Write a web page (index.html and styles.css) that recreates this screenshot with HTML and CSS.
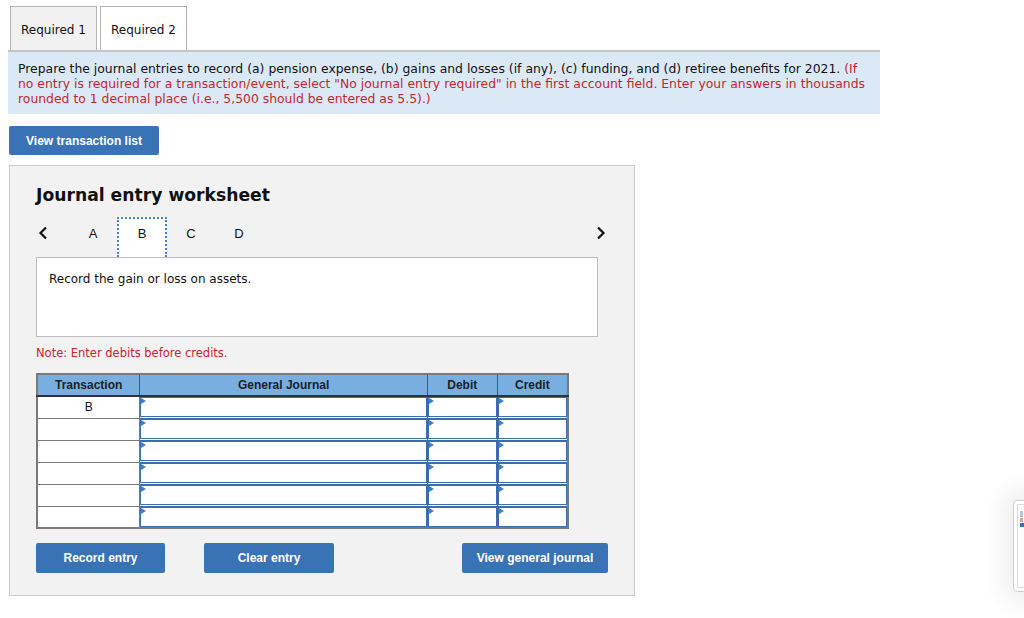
FILE: index.html
```html
<!DOCTYPE html>
<html>
<head>
<meta charset="utf-8">
<link rel="stylesheet" href="styles.css">
</head>
<body>
<div class="page">
  <div class="tabs">
    <div class="tab">Required 1</div>
    <div class="tab active">Required 2</div>
  </div>
  <div class="info">
    Prepare the journal entries to record (a) pension expense, (b) gains and losses (if any), (c) funding, and (d) retiree benefits for 2021. <span class="red">(If no entry is required for a transaction/event, select "No journal entry required" in the first account field. Enter your answers in thousands rounded to 1 decimal place (i.e., 5,500 should be entered as 5.5).)</span>
  </div>
  <button class="btn btn-list">View transaction list</button>

  <div class="worksheet">
    <h2 class="ws-title">Journal entry worksheet</h2>
    <div class="ws-nav">
      <span class="chev prev"><svg width="10" height="14" viewBox="0 0 10 14"><path d="M8 1.5 L2.5 7 L8 12.5" fill="none" stroke="#111" stroke-width="2.2"/></svg></span>
      <span class="step">A</span>
      <span class="step current">B</span>
      <span class="step">C</span>
      <span class="step">D</span>
      <span class="chev next"><svg width="10" height="14" viewBox="0 0 10 14"><path d="M2 1.5 L7.5 7 L2 12.5" fill="none" stroke="#111" stroke-width="2.2"/></svg></span>
    </div>
    <div class="desc">Record the gain or loss on assets.</div>
    <div class="note">Note: Enter debits before credits.</div>

    <table class="journal">
      <thead>
        <tr>
          <th class="c-tr">Transaction</th>
          <th class="c-gj">General Journal</th>
          <th class="c-dr">Debit</th>
          <th class="c-cr">Credit</th>
        </tr>
      </thead>
      <tbody>
        <tr><td class="tr">B</td><td class="in"><div class="box"></div></td><td class="in"><div class="box"></div></td><td class="in"><div class="box"></div></td></tr>
        <tr><td class="tr"></td><td class="in"><div class="box"></div></td><td class="in"><div class="box"></div></td><td class="in"><div class="box"></div></td></tr>
        <tr><td class="tr"></td><td class="in"><div class="box"></div></td><td class="in"><div class="box"></div></td><td class="in"><div class="box"></div></td></tr>
        <tr><td class="tr"></td><td class="in"><div class="box"></div></td><td class="in"><div class="box"></div></td><td class="in"><div class="box"></div></td></tr>
        <tr><td class="tr"></td><td class="in"><div class="box"></div></td><td class="in"><div class="box"></div></td><td class="in"><div class="box"></div></td></tr>
        <tr><td class="tr"></td><td class="in"><div class="box"></div></td><td class="in"><div class="box"></div></td><td class="in"><div class="box"></div></td></tr>
      </tbody>
    </table>

    <div class="actions">
      <button class="btn btn-record">Record entry</button>
      <button class="btn btn-clear">Clear entry</button>
      <button class="btn btn-view">View general journal</button>
    </div>
  </div>
</div>

<div class="thumb">
  <div class="thumb-inner">
    <span class="t1"></span>
    <span class="t2"></span>
    <span class="t3"></span>
  </div>
</div>
</body>
</html>
```

FILE: styles.css
```css
* { box-sizing: border-box; }
html, body { margin: 0; padding: 0; background: #fff; }
body {
  font-family: "DejaVu Sans", Verdana, sans-serif;
  font-size: 12px;
  color: #111;
  overflow: hidden;
  height: 618px;
}
.page {
  padding: 6px 0 0 8px;
}
.tabs {
  display: flex;
  gap: 3px;
  padding-left: 2px;
  width: 872px;
  border-bottom: 2px solid #c4c4c4;
}
.tab {
  width: 87px;
  height: 44px;
  padding-top: 1px;
  line-height: 44px;
  text-align: center;
  background: #f1f1f1;
  border: 1px solid #b3b3b3;
  border-bottom: none;
  font-size: 12px;
}
.tab.active { background: #fff; }

.info {
  width: 872px;
  height: 62px;
  background: #dbe9f7;
  padding: 9px 10px 0 10px;
  line-height: 15px;
  font-size: 12.4px;
  color: #111;
}
.red { color: #c1272d; }

.btn {
  display: block;
  border: none;
  border-radius: 2px;
  background: #3a73b5;
  color: #fff;
  font-family: "Liberation Sans", Arial, sans-serif;
  font-weight: bold;
  font-size: 12px;
  padding: 0;
  height: 30px;
}
.btn-list {
  margin: 12px 0 0 1px;
  width: 150px;
  height: 29px;
}

.worksheet {
  margin: 10px 0 0 1px;
  width: 626px;
  height: 431px;
  background: #f2f2f2;
  border: 1px solid #cbcbcb;
  padding: 18px 0 0 26px;
}
.ws-title {
  margin: 0;
  font-size: 17.2px;
  font-weight: bold;
  line-height: 22px;
  color: #111;
}
.ws-nav {
  display: flex;
  align-items: center;
  margin-top: 11px;
  width: 570px;
  height: 40px;
}
.chev { display: flex; align-items: center; margin-top: -8px; }
.chev.prev { width: 33px; padding-left: 2px; }
.chev.next { margin-left: auto; }
.step {
  width: 48px;
  height: 40px;
  line-height: 34px;
  text-align: center;
  font-family: "Liberation Sans", Arial, sans-serif;
  font-size: 13px;
}
.step.current {
  width: 50px;
  background: #fff;
  border: 2px dotted #4a82c4;
  border-bottom: none;
  line-height: 30px;
  position: relative;
  z-index: 1;
}
.desc {
  width: 562px;
  height: 80px;
  background: #fff;
  border: 1px solid #bdbdbd;
  padding: 13px 12px;
  font-size: 12px;
  line-height: 16px;
}
.note {
  color: #c1272d;
  font-size: 11.5px;
  margin-top: 8px;
  line-height: 16px;
}

.journal {
  margin-top: 12px;
  border-collapse: collapse;
  width: 533px;
  font-family: "Liberation Sans", Arial, sans-serif;
  font-size: 12px;
  border: 2px solid #7a7a7a;
}
.journal th {
  background: #79aee1;
  height: 22px;
  border: 1px solid #555;
  border-bottom: 2px solid #333;
  font-weight: bold;
  color: #1e1e1e;
  padding: 0;
}
.c-tr { width: 103px; }
.c-gj { width: 289px; }
.c-dr { width: 70px; }
.c-cr { width: 71px; }
.journal td {
  height: 22px;
  padding: 0;
  background: #fff;
  border: 1px solid #7a7a7a;
}
.journal td.tr { text-align: center; font-size: 12px; }
.journal td.in { border-color: #3a6aa8; border-width: 1px; }
.box {
  position: relative;
  height: 20px;
  border: 1px solid #3d6fb0;
  background: #fff;
}
.box::before {
  content: "";
  position: absolute;
  left: 0;
  top: 0;
  border-left: 5px solid #3b7fd0;
  border-top: 3px solid transparent;
  border-bottom: 3px solid transparent;
}

.actions {
  display: flex;
  margin-top: 14px;
}
.btn-record { width: 129px; }
.btn-clear { width: 130px; margin-left: 39px; }
.btn-view { width: 146px; margin-left: 128px; }

.thumb {
  position: fixed;
  left: 1013px;
  top: 500px;
  width: 40px;
  height: 92px;
  background: #fff;
  border: 1px solid #d0d0d0;
  border-radius: 4px;
  box-shadow: 0 0 24px 8px rgba(0,0,0,0.08);
  padding: 3px;
}
.thumb-inner {
  height: 100%;
  border: 1px solid #ddd;
  position: relative;
}
.thumb-inner span { position: absolute; left: 2px; display: block; }
.t1 { top: 6px; width: 3px; height: 6px; background: #b6c6de; }
.t2 { top: 13px; width: 3px; height: 4px; background: #e0a0a0; }
.t3 { top: 18px; width: 4px; height: 4px; background: #3a73b5; }
```
